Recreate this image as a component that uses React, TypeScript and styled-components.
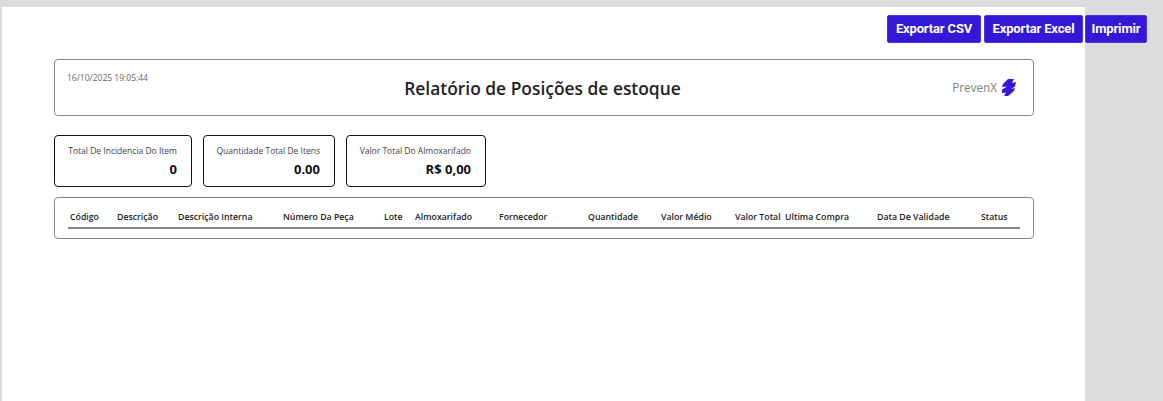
import React from "react";
import styled, { createGlobalStyle } from "styled-components";

const Global = createGlobalStyle`
  html, body { margin: 0; padding: 0; background: #dcdcdc; overflow: hidden; }
  body { font-family: "Open Sans", "Noto Sans", sans-serif; }
`;

const Sheet = styled.main`
  margin: 7px 0 0 2px;
  width: 1083px;
  height: 394px;
  background: #fff;
  box-sizing: border-box;
  padding: 8px 0 0 52px;
`;

const Toolbar = styled.div`
  display: flex;
  justify-content: flex-end;
  gap: 2px;
  margin-right: -62px;
  height: 28px;
`;

const ActionButton = styled.button<{ $w: number; $lead?: number }>`
  height: 28px;
  width: ${(p) => p.$w}px;
  margin-left: ${(p) => p.$lead ?? 0}px;
  padding: 0 0 2px;
  border: 1px solid #4a38e0;
  border-radius: 2px;
  background: #3418d8;
  color: #fff;
  font-family: Roboto, sans-serif;
  font-weight: 700;
  font-size: 13px;
  letter-spacing: -0.15px;
  white-space: nowrap;
`;

const Header = styled.header`
  margin-top: 16px;
  width: 980px;
  height: 57px;
  box-sizing: border-box;
  border: 1px solid #8a8a8a;
  border-radius: 4px;
  display: grid;
  grid-template-columns: 1fr auto 1fr;
  padding: 0 17px 0 12px;
`;

const Stamp = styled.div`
  font-size: 8.5px;
  line-height: 11px;
  color: #666;
  padding-top: 12px;
`;

const Title = styled.h1`
  margin: 0;
  padding-top: 16px;
  padding-left: 2px;
  font-size: 17.4px;
  line-height: 24px;
  font-weight: 600;
  color: #222;
`;

const Brand = styled.div`
  display: flex;
  justify-content: flex-end;
  align-items: center;
  gap: 4px;
  padding-bottom: 1px;
  font-size: 11.7px;
  color: #808080;
`;

const Cards = styled.section`
  display: flex;
  gap: 11px;
  margin-top: 19px;
`;

const Card = styled.div<{ $w: number }>`
  width: ${(p) => p.$w}px;
  height: 52px;
  box-sizing: border-box;
  border: 1px solid #111;
  border-radius: 4px;
  padding: 9px 14px 0 12px;
  display: flex;
  flex-direction: column;
  align-items: flex-end;
`;

const CardLabel = styled.div`
  font-size: 8.5px;
  line-height: 11px;
  color: #444;
  white-space: nowrap;
`;

const CardValue = styled.div`
  font-size: 13px;
  line-height: 17px;
  margin-top: 5px;
  font-weight: 700;
  color: #111;
  white-space: nowrap;
`;

const TableBox = styled.section`
  margin-top: 10px;
  width: 980px;
  height: 42px;
  box-sizing: border-box;
  border: 1px solid #8a8a8a;
  border-radius: 4px;
  padding: 0 13px;
`;

const HeadRow = styled.div`
  display: grid;
  grid-template-columns: 47px 61px 105px 101px 31px 84px 89px 73px 74px 50px 92px 104px 41px;
  height: 29px;
  padding-left: 2px;
  align-items: center;
  border-bottom: 2px solid #858585;
`;

const HeadCell = styled.div`
  font-size: 8.75px;
  font-weight: 600;
  color: #222;
  white-space: nowrap;
  padding-top: 8px;
`;

const columns = [
  "Código", "Descrição", "Descrição Interna", "Número Da Peça", "Lote", "Almoxarifado", "Fornecedor",
  "Quantidade", "Valor Médio", "Valor Total", "Ultima Compra", "Data De Validade", "Status",
];

const Logo = () => (
  <svg width="15" height="17" viewBox="0 0 15 17" fill="#3418d8" aria-hidden="true">
    <path d="M7 0 L13 0 L11 4 L15 3 L14 7.5 L10 10 L14 9 L13 12 L7 17 L3 17 L5 13.5 L1 14 L1 10.5 L6 7.5 L1 8 L2 5 Z" />
  </svg>
);

export default function App() {
  return (
    <>
      <Global />
      <Sheet>
        <Toolbar>
          <ActionButton $w={94}>Exportar CSV</ActionButton>
          <ActionButton $w={99} $lead={1}>Exportar Excel</ActionButton>
          <ActionButton $w={62}>Imprimir</ActionButton>
        </Toolbar>
        <Header>
          <Stamp>16/10/2025 19:05:44</Stamp>
          <Title>Relatório de Posições de estoque</Title>
          <Brand>PrevenX<Logo /></Brand>
        </Header>
        <Cards>
          <Card $w={138}><CardLabel>Total De Incidencia Do Item</CardLabel><CardValue>0</CardValue></Card>
          <Card $w={132}><CardLabel>Quantidade Total De Itens</CardLabel><CardValue>0.00</CardValue></Card>
          <Card $w={140}><CardLabel>Valor Total Do Almoxarifado</CardLabel><CardValue>R$ 0,00</CardValue></Card>
        </Cards>
        <TableBox>
          <HeadRow>
            {columns.map((c) => <HeadCell key={c}>{c}</HeadCell>)}
          </HeadRow>
        </TableBox>
      </Sheet>
    </>
  );
}
